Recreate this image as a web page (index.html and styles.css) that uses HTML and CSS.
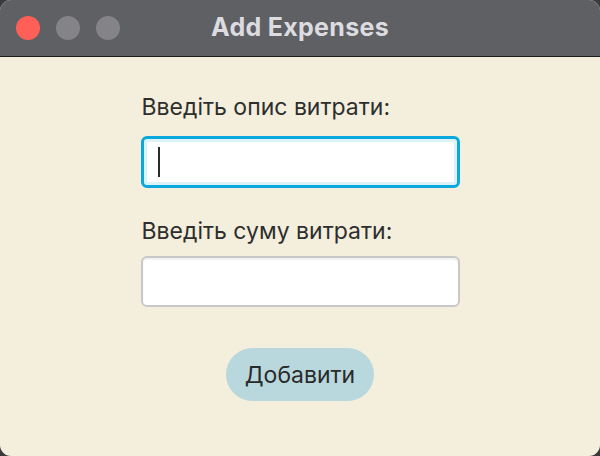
FILE: index.html
```html
<!DOCTYPE html>
<html lang="uk">
<head>
<meta charset="utf-8">
<link rel="stylesheet" href="styles.css">
<title>Add Expenses</title>
</head>
<body>
<div class="window">
  <div class="titlebar">
    <div class="lights">
      <span class="light red"></span>
      <span class="light grey"></span>
      <span class="light grey"></span>
    </div>
    <div class="title">Add Expenses</div>
  </div>
  <div class="content">
    <div class="form">
      <label class="label">Введіть опис витрати:</label>
      <div class="field focused"><span class="caret"></span></div>
      <label class="label second">Введіть суму витрати:</label>
      <div class="field plain"></div>
      <div class="actions"><button class="btn">Добавити</button></div>
    </div>
  </div>
</div>
</body>
</html>
```
FILE: styles.css
```css
html, body {
  margin: 0;
  padding: 0;
  width: 600px;
  height: 456px;
  background: #3a3a3c;
  overflow: hidden;
}
.window {
  width: 600px;
  height: 456px;
  border-radius: 11px;
  overflow: hidden;
  display: flex;
  flex-direction: column;
  background: #f4efdc;
  font-family: Inter, "Noto Sans", sans-serif;
}
.titlebar {
  position: relative;
  height: 57px;
  flex: 0 0 57px;
  background: #5f6064;
  border-bottom: 1px solid #1e1e1e;
  box-sizing: border-box;
  display: flex;
  align-items: center;
  justify-content: center;
}
.lights {
  position: absolute;
  left: 16px;
  top: 16px;
  display: flex;
  gap: 16px;
}
.light {
  width: 24px;
  height: 24px;
  border-radius: 50%;
  background: #838388;
}
.light.red { background: #fe5f57; }
.title {
  color: #dcdce0;
  font-weight: 700;
  font-size: 25px;
  letter-spacing: 0.3px;
  margin-top: -3px;
}
.content {
  flex: 1;
  display: flex;
  justify-content: center;
}
.form {
  width: 319px;
  padding-top: 37px;
  display: flex;
  flex-direction: column;
}
.label {
  color: #2e2e2e;
  font-size: 23px;
  line-height: 26px;
  padding-left: 1px;
}
.label.second { margin-top: 30px; }
.field {
  box-sizing: border-box;
  height: 52px;
  border-radius: 6px;
  background: #fff;
  margin-top: 16px;
}
.field.focused {
  border: 3px solid #0ba8de;
  box-shadow: inset 0 0 0 3px #dcf2f9;
  padding: 8px 0 0 14px;
}
.caret {
  display: block;
  width: 2px;
  height: 30px;
  background: #2a2a2a;
}
.field.plain {
  height: 51px;
  margin-top: 12px;
  border: 2px solid #c8c8c8;
  box-shadow: inset 0 2px 2px rgba(0,0,0,0.06);
}
.actions {
  display: flex;
  justify-content: center;
  margin-top: 41px;
}
.btn {
  width: 148px;
  height: 53px;
  border: none;
  border-radius: 27px;
  background: #b9d8dd;
  color: #2a2a2a;
  font-family: Inter, "Noto Sans", sans-serif;
  font-size: 23px;
  padding: 0;
}
```
